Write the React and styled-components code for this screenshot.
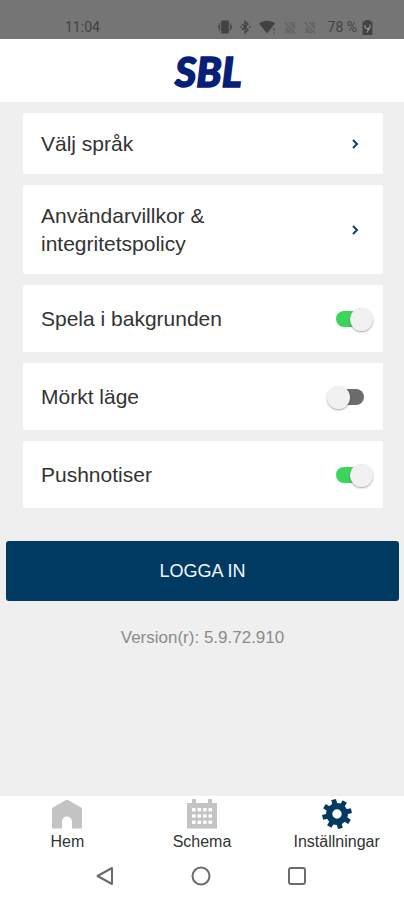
import { useState } from "react";
import styled, { createGlobalStyle } from "styled-components";

const GlobalStyle = createGlobalStyle`
  * {
    box-sizing: border-box;
  }
  body {
    margin: 0;
    background: #efefef;
    font-family: "Liberation Sans", Arial, sans-serif;
    color: #333;
  }
  button {
    font-family: inherit;
    color: inherit;
    border: 0;
    cursor: pointer;
  }
`

const Page = styled.div`
  display: flex;
  flex-direction: column;
  min-height: 100vh;
`

const StatusBar = styled.div`
  display: flex;
  align-items: flex-end;
  justify-content: space-between;
  height: 39px;
  padding: 0 31px 2px 65px;
  background: #757575;
  color: #424242;
  font-family: Roboto, sans-serif;
  font-size: 14px;
  line-height: 20px;
`

const Clock = styled.span``

const StatusIcons = styled.div`
  display: flex;
  align-items: center;
  gap: 8px;
`

const Battery = styled.span`
  display: flex;
  align-items: center;
  gap: 5px;
  padding-left: 4px;
`

const Header = styled.header`
  display: flex;
  align-items: center;
  justify-content: center;
  height: 63px;
  padding-left: 12px;
  background: #fff;
`

const Content = styled.main`
  flex: 1;
  display: flex;
  flex-direction: column;
  padding: 11px 5px 24px 6px;
`

const Settings = styled.div`
  display: flex;
  flex-direction: column;
  gap: 11px;
  padding: 0 16px 0 17px;
`

const Card = styled.div`
  display: flex;
  align-items: center;
  justify-content: space-between;
  width: 100%;
  padding: 17px 10px 16px 18px;
  border-radius: 2px;
  background: #fff;
  font-size: 21px;
  line-height: 28px;
  text-align: left;
`

const LinkCard = styled(Card).attrs({ as: "button", type: "button" })`
  padding-right: 24px;
`

const LinkText = styled.span`
  max-width: 200px;
`

const SwitchLabel = styled.label`
  flex: 1;
`

const Switch = styled.input.attrs({ type: "checkbox", role: "switch" })`
  appearance: none;
  display: grid;
  align-items: center;
  width: 46px;
  height: 34px;
  margin: 0;
  cursor: pointer;

  &::before,
  &::after {
    content: "";
    grid-area: 1 / 1;
  }
  &::before {
    justify-self: center;
    width: 28px;
    height: 16px;
    border-radius: 8px;
    background: #6c6c6c;
  }
  &::after {
    justify-self: start;
    width: 23px;
    height: 23px;
    border-radius: 50%;
    background: #f1f1f1;
    box-shadow: 0 1px 2px rgba(0, 0, 0, 0.35);
  }
  &:checked::before {
    background: #3bd45c;
  }
  &:checked::after {
    justify-self: end;
  }
`

const LoginButton = styled.button`
  margin-top: 33px;
  padding: 16px;
  border-radius: 3px;
  background: #003a63;
  color: #f4f7fa;
  font-size: 18px;
  line-height: 28px;
`

const Version = styled.p`
  margin: 27px 0 0;
  color: #8b8b8b;
  font-size: 17px;
  line-height: 20px;
  text-align: center;
`

const TabBar = styled.nav`
  display: grid;
  grid-template-columns: repeat(3, 1fr);
  background: #fff;
`

const Tab = styled.a`
  display: flex;
  flex-direction: column;
  align-items: center;
  gap: 3px;
  padding-top: 3px;
  color: ${(props) => (props.$active ? "#003a63" : "#c4c4c4")};
  text-decoration: none;
`

const TabText = styled.span`
  color: #333;
  font-size: 16px;
  line-height: 20px;
`

const SystemBar = styled.div`
  display: flex;
  align-items: center;
  justify-content: center;
  gap: 72px;
  height: 48px;
  padding-right: 2px;
  background: #fff;
`

const SystemButton = styled.button`
  display: flex;
  padding: 0;
  background: none;
`

const Logo = () => (
  <svg width="92" height="58" viewBox="0 0 92 58" role="img" aria-label="SBL">
    <text
      x="13"
      y="45"
      fill="#06207a"
      stroke="#06207a"
      strokeWidth="1.5"
      fontFamily="Lato, 'Lato Black', sans-serif"
      fontSize="41"
      fontWeight="900"
      fontStyle="italic"
    >
      SBL
    </text>
  </svg>
)

const VibrateIcon = () => (
  <svg width="14" height="14" viewBox="0 0 14 14" fill="currentColor">
    <rect x="3.2" y="0.5" width="7.6" height="13" rx="1" />
    <path d="M1.8 3v8M0.4 5v4M12.2 3v8M13.6 5v4" stroke="currentColor" strokeWidth="0.9" />
  </svg>
)

const BluetoothIcon = () => (
  <svg width="11" height="14" viewBox="0 0 11 14" fill="none" stroke="currentColor" strokeWidth="1.3">
    <path d="M2 4l6 6-3 2.8V1.2L8 4l-6 6" />
    <path d="M0.3 7h1.5M9.2 7h1.5" />
  </svg>
)

const WifiIcon = () => (
  <svg width="17" height="14" viewBox="0 0 17 14" fill="currentColor">
    <path d="M0 3.6C4.5-.2 12-.2 16 3.6L8 13.4z" />
    <path d="M15 8v3M15 12.4v1.2" stroke="currentColor" strokeWidth="1" />
  </svg>
)

const NoSimIcon = () => (
  <svg width="12" height="14" viewBox="0 0 12 14">
    <path d="M4.5 2H11v8.5zM1.5 6L8.5 13h-7z" fill="#666" />
    <path d="M0.8 2.5l10.4 11" stroke="#606060" strokeWidth="1.2" />
  </svg>
)

const BatteryIcon = () => (
  <svg width="11" height="15" viewBox="0 0 11 15">
    <path d="M3 0h5v1.6h2.4V15H.6V1.6H3z" fill="currentColor" />
    <path d="M3 5v2.5L5.5 9 8 7.5V4.5M8 7L5 12.5" stroke="#9a9a9a" strokeWidth="1.1" fill="none" />
  </svg>
)

const Chevron = () => (
  <svg width="7" height="10" viewBox="0 0 7 10" fill="none" stroke="#0b456b" strokeWidth="2">
    <path d="M1 1l4 4-4 4" />
  </svg>
)

const HomeIcon = () => (
  <svg width="30" height="30" viewBox="0 0 30 30" fill="currentColor">
    <path d="M15 0.5L30 9v20.5H20v-7a5 5 0 0 0-10 0v7H0V9z" />
  </svg>
)

const CalendarIcon = () => (
  <svg width="32" height="30" viewBox="0 0 32 30" fill="currentColor">
    <path d="M1 4h5V0h4v4h12V0h4v4h5v25.5H1z" />
    <g fill="#fff">
      {[9, 15.2, 21.4].map((y) =>
        [6, 11.5, 17, 22.5].map((x) => <rect key={`${x}-${y}`} x={x} y={y} width="3.6" height="3.6" rx="0.8" />)
      )}
    </g>
  </svg>
)

const GearIcon = () => (
  <svg width="30" height="30" viewBox="-15 -15 30 30">
    <g fill="currentColor" transform="rotate(-13)">
      {[0, 45, 90, 135, 180, 225, 270, 315].map((angle) => (
        <path key={angle} d="M-2.6-9L-2.4-14.8H2.4L2.6-9z" transform={`rotate(${angle})`} />
      ))}
    </g>
    <circle r="7.8" fill="none" stroke="currentColor" strokeWidth="6.2" />
  </svg>
)

const SwitchCard = ({ id, text, initial }) => {
  const [on, setOn] = useState(initial)
  return (
    <Card>
      <SwitchLabel htmlFor={id}>{text}</SwitchLabel>
      <Switch id={id} checked={on} onChange={(e) => setOn(e.target.checked)} />
    </Card>
  )
}

export default function App() {
  return (
    <Page>
      <GlobalStyle />
      <StatusBar>
        <Clock>11:04</Clock>
        <StatusIcons>
          <VibrateIcon />
          <BluetoothIcon />
          <WifiIcon />
          <NoSimIcon />
          <NoSimIcon />
          <Battery>
            78 % <BatteryIcon />
          </Battery>
        </StatusIcons>
      </StatusBar>
      <Header>
        <Logo />
      </Header>

      <Content>
        <Settings>
          <LinkCard>
            <LinkText>Välj språk</LinkText>
            <Chevron />
          </LinkCard>
          <LinkCard>
            <LinkText>Användarvillkor & integritetspolicy</LinkText>
            <Chevron />
          </LinkCard>
          <SwitchCard id="background" text="Spela i bakgrunden" initial={true} />
          <SwitchCard id="dark" text="Mörkt läge" initial={false} />
          <SwitchCard id="push" text="Pushnotiser" initial={true} />
        </Settings>
        <LoginButton type="button">LOGGA IN</LoginButton>
        <Version>Version(r): 5.9.72.910</Version>
      </Content>

      <TabBar>
        <Tab href="#hem">
          <HomeIcon />
          <TabText>Hem</TabText>
        </Tab>
        <Tab href="#schema">
          <CalendarIcon />
          <TabText>Schema</TabText>
        </Tab>
        <Tab href="#installningar" $active aria-current="page">
          <GearIcon />
          <TabText>Inställningar</TabText>
        </Tab>
      </TabBar>
      <SystemBar>
        <SystemButton type="button" aria-label="Tillbaka">
          <svg width="24" height="24" viewBox="0 0 24 24" fill="none" stroke="#6b6b6b" strokeWidth="2" strokeLinejoin="round">
            <path d="M19 4v16L4.5 12z" />
          </svg>
        </SystemButton>
        <SystemButton type="button" aria-label="Startskärm">
          <svg width="24" height="24" viewBox="0 0 24 24" fill="none" stroke="#6b6b6b" strokeWidth="2">
            <circle cx="12" cy="12" r="8.5" />
          </svg>
        </SystemButton>
        <SystemButton type="button" aria-label="Senaste appar">
          <svg width="24" height="24" viewBox="0 0 24 24" fill="none" stroke="#6b6b6b" strokeWidth="2">
            <rect x="4" y="4" width="16" height="16" rx="2" />
          </svg>
        </SystemButton>
      </SystemBar>
    </Page>
  )
}
